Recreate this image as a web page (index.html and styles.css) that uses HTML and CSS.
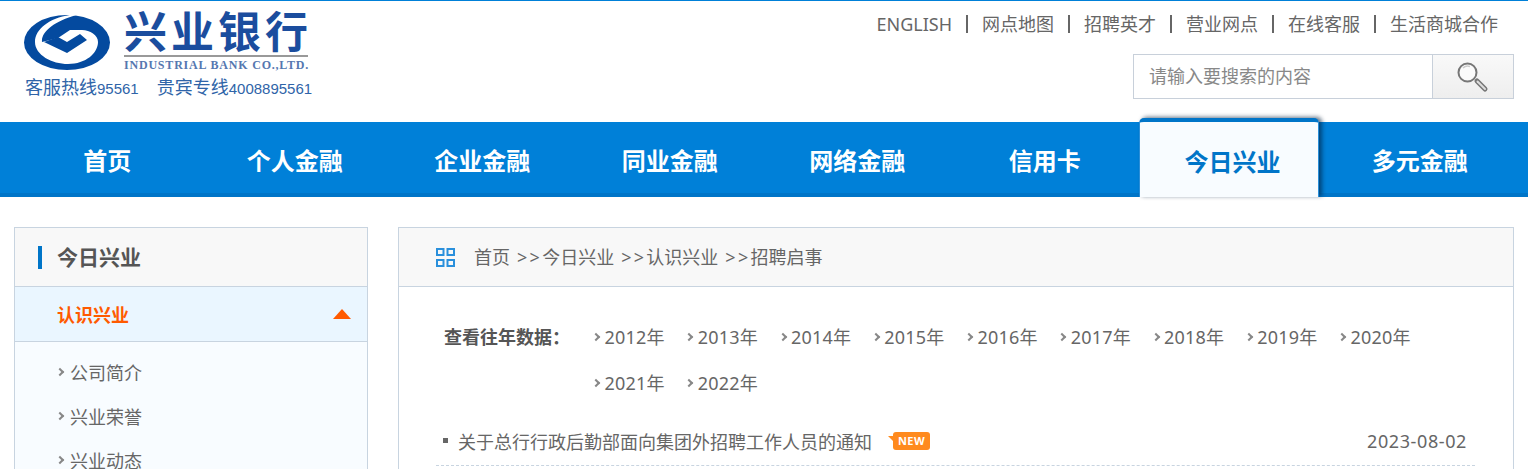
FILE: index.html
```html
<!DOCTYPE html>
<html>
<head>
<title>招聘启事</title>
<link rel="stylesheet" href="styles.css">
</head>
<body>

<div class="header">
  <div class="logo">
    <div class="logo-top">
      <svg class="logo-mark" width="86" height="55" viewBox="0 0 86 55">
        <ellipse cx="43" cy="27.500" rx="43" ry="27.500" fill="#044a9f"/>
        <path d="M56 -1 C30 0 11 12 11 27 C11 40 28 49 44 49 C62 49 74 38 74 27 C74 20 66 15 58 15 L46 15 L34 23 L18 27 C17 16 32 5 56 -1 Z" fill="#fff"/>
        <path d="M20 27 L43 38 L63 25 L56 19 L43 27 L34 22 Z" fill="#044a9f"/>
      </svg>
      <div class="logo-name">
        <div class="logo-cn">兴业银行</div>
        <div class="logo-en">INDUSTRIAL BANK CO.,LTD.</div>
      </div>
    </div>
    <div class="logo-tel">
      <span>客服热线<b>95561</b></span>
      <span>贵宾专线<b>4008895561</b></span>
    </div>
  </div>
  <div class="header-right">
    <div class="top-links">
      <a>ENGLISH</a><a>网点地图</a><a>招聘英才</a><a>营业网点</a><a>在线客服</a><a>生活商城合作</a>
    </div>
    <div class="search">
      <div class="search-input">请输入要搜索的内容</div>
      <div class="search-btn">
        <svg width="34" height="32" viewBox="0 0 34 32">
          <circle cx="11.500" cy="11.500" r="9" fill="#fbfbfb" stroke="#777" stroke-width="2"/>
          <path d="M7 7 A6.500 6.500 0 0 1 14 5.500" fill="none" stroke="#ccc" stroke-width="1.500"/>
          <path d="M21 20 L29 28" stroke="#777" stroke-width="5" stroke-linecap="round"/>
          <path d="M21.500 20.500 L29 28" stroke="#ddd" stroke-width="2" stroke-linecap="round"/>
        </svg>
      </div>
    </div>
  </div>
</div>

<div class="nav">
  <a>首页</a>
  <a>个人金融</a>
  <a>企业金融</a>
  <a>同业金融</a>
  <a>网络金融</a>
  <a>信用卡</a>
  <a class="active">今日兴业</a>
  <a>多元金融</a>
</div>

<div class="content">
  <div class="sidebar">
    <div class="side-title"><span>今日兴业</span></div>
    <div class="side-current">认识兴业<i class="arrow-up"></i></div>
    <ul class="side-list">
      <li>公司简介</li>
      <li>兴业荣誉</li>
      <li>兴业动态</li>
    </ul>
  </div>
  <div class="main">
    <div class="crumbs">
      <svg width="19" height="19" viewBox="0 0 19 19" fill="none" stroke="#2a90dc" stroke-width="2">
        <rect x="1" y="1" width="6.500" height="6"/>
        <rect x="11.500" y="1" width="6.500" height="6"/>
        <rect x="1" y="12" width="6.500" height="6"/>
        <rect x="11.500" y="12" width="6.500" height="6"/>
      </svg>
      <span>首页<i class="sep"> &gt;&gt;</i>今日兴业<i class="sep"> &gt;&gt;</i>认识兴业<i class="sep"> &gt;&gt;</i>招聘启事</span>
    </div>
    <div class="years">
      <div class="years-label">查看往年数据：</div>
      <div class="years-list">
        <a>2012年</a><a>2013年</a><a>2014年</a><a>2015年</a><a>2016年</a><a>2017年</a><a>2018年</a><a>2019年</a><a>2020年</a><a>2021年</a><a>2022年</a>
      </div>
    </div>
    <ul class="news">
      <li>
        <span class="dot"></span>
        <a>关于总行行政后勤部面向集团外招聘工作人员的通知</a>
        <span class="new-tag">NEW</span>
        <span class="date">2023-08-02</span>
      </li>
    </ul>
  </div>
</div>

</body>
</html>
```

FILE: styles.css
```css
html, body {
  height: 469px;
  overflow: hidden;
}
body {
  margin: 0;
  background-color: #fff;
  color: #666;
  font-family: "Noto Sans", "Noto Sans CJK SC", sans-serif;
  font-size: 18px;
}
ul {
  margin: 0;
  padding: 0;
  list-style: none;
}

/* header */
.header {
  display: flex;
  justify-content: space-between;
  height: 121px;
  border-top: 1px solid #0080d8;
  padding: 0 14px 0 24px;
}
.logo {
  padding-top: 14px;
}
.logo-top {
  display: flex;
  align-items: flex-start;
  gap: 14px;
}
.logo-name {
  width: 184px;
}
.logo-cn {
  height: 40px;
  border-bottom: 2px solid #999;
  color: #1b4d9e;
  font-family: "Liberation Serif", "Noto Sans CJK SC", serif;
  font-size: 43px;
  font-weight: bold;
  line-height: 38px;
  letter-spacing: 4px;
  white-space: nowrap;
}
.logo-en {
  margin-top: 1px;
  color: #5577b0;
  font-family: "Liberation Serif", serif;
  font-size: 12px;
  font-weight: bold;
  letter-spacing: 0.800px;
  line-height: 14px;
  white-space: nowrap;
}
.logo-tel {
  display: flex;
  gap: 18px;
  margin-top: 5px;
  padding-left: 1px;
  color: #2f64a8;
  font-size: 18px;
  line-height: 20px;
  white-space: nowrap;
}
.logo-tel b {
  font-family: "Liberation Sans", sans-serif;
  font-size: 15px;
  font-weight: normal;
}
.header-right {
  display: flex;
  flex-direction: column;
  align-items: flex-end;
}
.top-links {
  display: flex;
  margin-top: 14px;
  padding-right: 16px;
}
.top-links a {
  padding: 0 14px;
  border-left: 2px solid #666;
  font-size: 18px;
  line-height: 18px;
}
.top-links a:first-child {
  border-left: 0;
}
.top-links a:last-child {
  padding-right: 0;
}
.search {
  display: flex;
  box-sizing: border-box;
  width: 381px;
  height: 45px;
  margin-top: 21px;
  border: 1px solid #c8d0da;
}
.search-input {
  flex: 1;
  padding-left: 15px;
  color: #888;
  font-size: 18px;
  line-height: 43px;
}
.search-btn {
  display: flex;
  align-items: center;
  justify-content: center;
  width: 80px;
  border-left: 1px solid #c8d0da;
  background: linear-gradient(#f9f9f9, #eee);
}

/* main nav */
.nav {
  display: grid;
  grid-template-columns: repeat(8, 187.500px);
  height: 71px;
  padding: 0 14px;
  border-bottom: 4px solid #0075c8;
  background-color: #0080d8;
}
.nav a {
  padding-right: 1px;
  color: #fff;
  font-size: 24px;
  font-weight: bold;
  line-height: 78px;
  text-align: center;
}
.nav a.active {
  position: relative;
  box-sizing: border-box;
  width: 180px;
  height: 79px;
  margin: -4px 0 -4px 0;
  padding: 0 0 0 7px;
  border-top: 4px solid #0075c8;
  border-right: 1px solid #2a8ed8;
  border-left: 1px solid #2a8ed8;
  border-radius: 5px 5px 0 0;
  background-color: #f8fcff;
  box-shadow: 3px -1px 4px rgba(0, 30, 60, 0.6);
  color: #0075c8;
  line-height: 79px;
}

/* page content */
.content {
  display: flex;
  gap: 30px;
  align-items: flex-start;
  padding: 30px 14px 0;
}
.sidebar {
  width: 352px;
  height: 300px;
  border: 1px solid #c8d4e0;
  background-color: #f8fcff;
}
.side-title {
  display: flex;
  align-items: center;
  height: 58px;
  padding-left: 23px;
  border-bottom: 1px solid #c8d4e0;
  background-color: #f8f8f8;
}
.side-title span {
  padding-left: 15px;
  border-left: 4px solid #0075c8;
  color: #555;
  font-size: 21px;
  font-weight: bold;
  line-height: 23px;
}
.side-current {
  display: flex;
  justify-content: space-between;
  align-items: center;
  height: 54px;
  padding: 0 16px 0 42px;
  border-bottom: 1px solid #c8d4e0;
  background-color: #eaf6ff;
  color: #ff5a00;
  font-size: 18px;
  font-weight: bold;
}
.arrow-up {
  width: 0;
  height: 0;
  border-left: 9px solid transparent;
  border-right: 9px solid transparent;
  border-bottom: 10px solid #ff5a00;
}
.side-list {
  padding-top: 8px;
}
.side-list li {
  display: flex;
  align-items: center;
  height: 44px;
  padding-left: 42px;
}
.side-list li::before,
.years-list a::before {
  content: "";
  flex: none;
  width: 4px;
  height: 4px;
  margin-right: 7px;
  border-top: 2.500px solid #888;
  border-right: 2.500px solid #888;
  transform: rotate(45deg);
}
.years-list a::before {
  margin-left: 1px;
  margin-right: 5.500px;
}
.main {
  flex: 1;
  height: 300px;
  border: 1px solid #c8d4e0;
}
.crumbs {
  display: flex;
  align-items: center;
  gap: 19px;
  height: 58px;
  padding-left: 37px;
  border-bottom: 1px solid #c8d4e0;
  background-color: #f8f8f8;
}
.crumbs span {
  line-height: 20px;
}
.sep {
  font-style: normal;
  letter-spacing: 2.300px;
}
.years {
  display: flex;
  padding: 27px 0 0 45px;
}
.years-label {
  flex: none;
  width: 148px;
  color: #555;
  font-weight: bold;
  line-height: 46px;
}
.years-list {
  display: flex;
  flex-wrap: wrap;
  width: 840px;
}
.years-list a {
  display: flex;
  align-items: center;
  width: 93.250px;
  line-height: 46px;
  letter-spacing: 0.200px;
}
.news {
  margin: 10px 38px 0 37px;
}
.news li {
  display: flex;
  align-items: center;
  box-sizing: border-box;
  height: 50px;
  padding: 0 8px 0 7px;
  border-bottom: 1px dashed #c8d4e0;
}
.dot {
  width: 5px;
  height: 5px;
  margin-right: 10px;
  background-color: #666;
}
.new-tag {
  position: relative;
  width: 37px;
  height: 18px;
  margin-left: 21px;
  border-radius: 3px;
  background-color: #ff8a1e;
  color: #fff;
  font-size: 11px;
  font-weight: bold;
  letter-spacing: 0.500px;
  line-height: 18px;
  text-align: center;
}
.new-tag::before {
  content: "";
  position: absolute;
  left: -5px;
  top: 4px;
  border-top: 5px solid #ff8a1e;
  border-left: 5px solid transparent;
}
.date {
  margin-left: auto;
  letter-spacing: 0.600px;
}
```
